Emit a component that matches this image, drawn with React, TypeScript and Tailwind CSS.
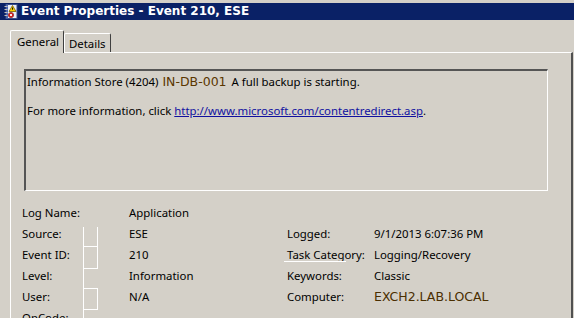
import React from 'react'

const ui = { fontFamily: '"Noto Sans", "Open Sans", sans-serif' }
const verdana = { fontFamily: '"DejaVu Sans", Verdana, sans-serif' }

function LogIcon() {
  return (
    <svg width="14" height="15" viewBox="0 0 14 15">
      <rect x="2" y="0.5" width="11" height="14" fill="#e9eef8" stroke="#3a4f8a" />
      <rect x="2" y="0.5" width="2" height="14" fill="#4a66b0" />
      <path d="M0.5 2.5h3M0.5 5.5h3M0.5 8.5h3M0.5 11.5h3" stroke="#c0c0c0" strokeWidth="1" />
      <path d="M8.5 1.5 L12 7.5 L5 7.5 Z" fill="#f6d200" stroke="#7a5d00" strokeWidth="0.8" />
      <rect x="8.1" y="3.5" width="0.9" height="2.2" fill="#000" />
      <circle cx="7" cy="11" r="2.6" fill="#d42020" stroke="#801010" strokeWidth="0.6" />
      <path d="M5.9 9.9l2.2 2.2M8.1 9.9l-2.2 2.2" stroke="#fff" strokeWidth="0.9" />
    </svg>
  )
}

function Field({ label, value, labelClass = '', valueClass = '', valueStyle }: { label: string; value: string; labelClass?: string; valueClass?: string; valueStyle?: React.CSSProperties }) {
  return (
    <>
      <div className={`h-[21px] flex items-center ${labelClass}`}>{label}</div>
      <div className={`h-[21px] flex items-center ${valueClass}`} style={valueStyle}>{value}</div>
    </>
  )
}

export default function App() {
  return (
    <div className="w-[574px] h-[318px] overflow-hidden bg-[#d4d0c8] text-black text-[11.4px] leading-[15px] pt-[3px]" style={ui}>
      <div className="h-[17px] bg-[#0a2166] flex items-center pl-[4px] gap-[3px]">
        <LogIcon />
        <span className="text-white font-bold text-[12px]" style={verdana}>
          Event Properties - Event 210, ESE
        </span>
      </div>

      <div className="pl-[10px] pt-[10px]">
        <div className="flex items-end h-[22px]">
          <div className="relative z-10 h-[23px] -mb-px w-[54px] bg-[#d4d0c8] border-l border-t border-white border-r border-r-[#404040] rounded-t-[2px] flex items-start pt-[3px] pl-[6px]">
            General
          </div>
          <div className="h-[19px] w-[47px] border-l border-t border-white border-r border-r-[#404040] rounded-t-[2px] flex items-start pt-[2px] pl-[4px]">
            Details
          </div>
        </div>

        <div className="relative w-[563px] h-[280px] border-l border-t border-white border-r-2 border-r-[#505050]">
          <div className="ml-[13px] mt-[16px] w-[524px] h-[122px] border-l-2 border-t-2 border-l-[#555] border-t-[#555] border-r border-b border-white pl-[1px] pt-[3px]">
            <div className="flex items-center h-[15px]">
              <span>Information Store (4204)</span>
              <span className="ml-[4px] mr-[5px] text-[#5a3600] text-[12.5px]" style={verdana}>IN-DB-001</span>
              <span>A full backup is starting.</span>
            </div>
            <div className="mt-[14px] h-[15px]">
              For more information, click{' '}
              <span className="text-[#1010a0] underline">http://www.microsoft.com/contentredirect.asp</span>.
            </div>
          </div>

          <div className="mt-[11px] ml-[11px] grid grid-cols-[107px_158px_87px_1fr]">
            <Field label="Log Name:" value="Application" />
            <div />
            <div />
            <Field label="Source:" value="ESE" />
            <Field label="Logged:" value="9/1/2013 6:07:36 PM" />
            <Field label="Event ID:" value="210" />
            <Field label="Task Category:" value="Logging/Recovery" />
            <Field label="Level:" value="Information" />
            <Field label="Keywords:" value="Classic" />
            <Field label="User:" value="N/A" />
            <Field label="Computer:" value="EXCH2.LAB.LOCAL" valueClass="text-[#4a2e00] text-[12.5px]" valueStyle={verdana} />
            <Field label="OpCode:" value="" />
          </div>

          <div className="absolute left-[72px] top-[174px] w-[15px] h-[20px] border-l border-r border-b border-white" />
          <div className="absolute left-[72px] top-[194px] w-[15px] h-[22px] border-l border-r border-b border-white" />
          <div className="absolute left-[72px] top-[216px] w-[1px] h-[20px] bg-white" />
          <div className="absolute left-[72px] top-[235px] w-[15px] h-[22px] border border-white" />
          <div className="absolute left-[72px] top-[257px] w-[1px] h-[20px] bg-white" />
          <div className="absolute left-[273px] top-[208px] w-[62px] h-[1px] bg-white" />
        </div>
      </div>
    </div>
  )
}
